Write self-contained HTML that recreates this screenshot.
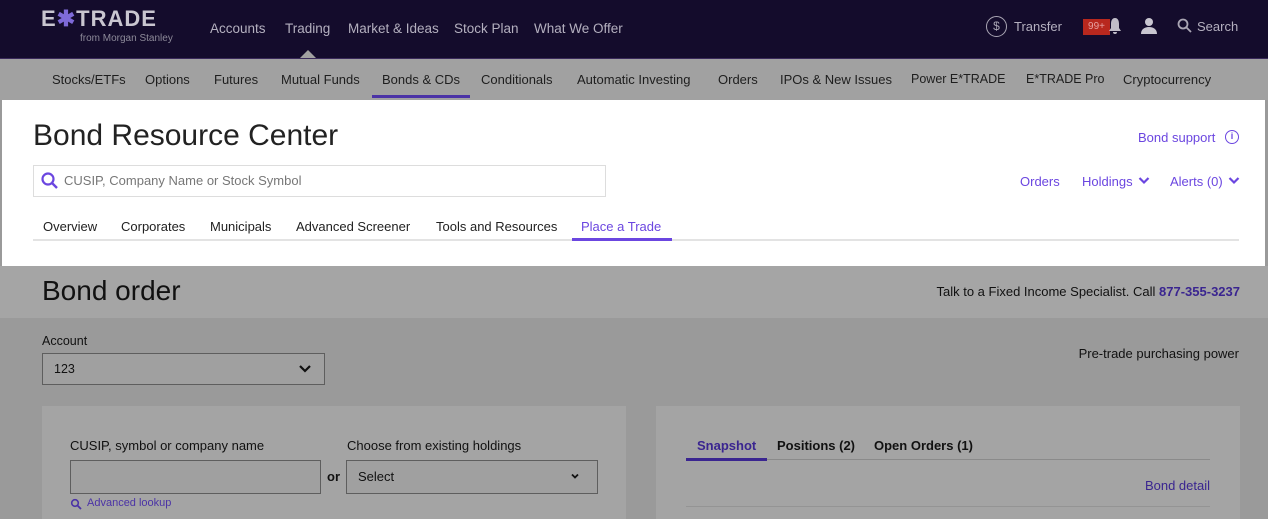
<!DOCTYPE html>
<html><head><meta charset="utf-8"><style>
*{box-sizing:border-box;margin:0;padding:0}
body{width:1268px;height:519px;overflow:hidden;font-family:"Liberation Sans",sans-serif;background:#9a9a9a;position:relative}
.a{position:absolute;white-space:nowrap}
#nav{position:absolute;left:0;top:0;width:1268px;height:58px;background:#140c2c}
#sub{position:absolute;left:0;top:58px;width:1268px;height:42px;background:#a1a1a1;border-top:1px solid #3a2a5a}
.n{color:#b4b0bf;font-size:13.5px;top:21px}
.s{color:#1e1e1e;font-size:13px;top:72px}
#white{position:absolute;left:2px;top:100px;width:1263px;height:166px;background:#fff}
.p{color:#6b46e0}
#band{position:absolute;left:0;top:266px;width:1268px;height:52px;background:#a5a5a5}
.card{position:absolute;background:#a4a4a4}
.box{position:absolute;border:1.5px solid #5e5e5e;background:#a0a0a0}
</style></head><body>
<div id="nav"></div>
<div class="a" style="left:41px;top:6px;color:#c9c6d0;font-size:22px;font-weight:bold;letter-spacing:1px">E<span style="color:#7e6ad8">✱</span>TRADE</div>
<div class="a" style="left:80px;top:33px;color:#8d8a99;font-size:10px">from Morgan Stanley</div>
<div class="a n" style="left:210px">Accounts</div>
<div class="a n" style="left:285px">Trading</div>
<div class="a n" style="left:348px">Market &amp; Ideas</div>
<div class="a n" style="left:454px">Stock Plan</div>
<div class="a n" style="left:534px">What We Offer</div>
<div class="a" style="left:300px;top:50px;width:0;height:0;border-left:8px solid transparent;border-right:8px solid transparent;border-bottom:8px solid #a1a1a1"></div>
<div class="a" style="left:986px;top:16px;width:21px;height:21px;border:1.5px solid #aaa6b4;border-radius:50%;color:#aaa6b4;font-size:12px;text-align:center;line-height:18px">$</div>
<div class="a n" style="left:1014px;top:19px;font-size:13px">Transfer</div>
<div class="a" style="left:1083px;top:19px;width:27px;height:16px;background:#b8281e;color:#e6a0a0;font-size:10px;text-align:center;line-height:16px">99+</div>
<svg class="a" style="left:1108px;top:17px" width="14" height="18" viewBox="0 0 14 18"><path d="M7 1C4 1 3 4 3 7v4l-2 3h12l-2-3V7c0-3-1-6-4-6zM5 15a2 2 0 0 0 4 0z" fill="#c0bdc8"/></svg>
<svg class="a" style="left:1140px;top:17px" width="18" height="18" viewBox="0 0 18 18"><circle cx="9" cy="5" r="4" fill="#c9c6d0"/><path d="M1 17c0-5 4-7 8-7s8 2 8 7z" fill="#c9c6d0"/></svg>
<svg class="a" style="left:1177px;top:18px" width="16" height="16" viewBox="0 0 16 16"><circle cx="6" cy="6" r="4.5" stroke="#aaa6b4" stroke-width="1.8" fill="none"/><path d="M9.5 9.5L14 14" stroke="#aaa6b4" stroke-width="1.8"/></svg>
<div class="a n" style="left:1197px;top:19px;font-size:13px">Search</div>
<div id="sub"></div>
<div class="a s" style="left:52px">Stocks/ETFs</div>
<div class="a s" style="left:145px">Options</div>
<div class="a s" style="left:214px">Futures</div>
<div class="a s" style="left:281px">Mutual Funds</div>
<div class="a s" style="left:382px">Bonds &amp; CDs</div>
<div class="a" style="left:372px;top:95px;width:98px;height:3px;background:#4b33a6"></div>
<div class="a s" style="left:481px">Conditionals</div>
<div class="a s" style="left:577px">Automatic Investing</div>
<div class="a s" style="left:718px">Orders</div>
<div class="a s" style="left:780px">IPOs &amp; New Issues</div>
<div class="a s" style="left:911px;font-size:12.5px">Power E*TRADE</div>
<div class="a s" style="left:1026px;font-size:12.5px">E*TRADE Pro</div>
<div class="a s" style="left:1123px">Cryptocurrency</div>
<div id="white"></div>
<div class="a" style="left:33px;top:119px;font-size:30px;color:#222">Bond Resource Center</div>
<div class="a p" style="left:1138px;top:130px;font-size:13px">Bond support</div>
<div class="a" style="left:1225px;top:130px;width:14px;height:14px;border:1.5px solid #6b46e0;border-radius:50%;color:#6b46e0;font-size:9px;text-align:center;line-height:11px;font-weight:bold">i</div>
<div class="a" style="left:33px;top:165px;width:573px;height:32px;border:1px solid #ddd"></div>
<svg class="a" style="left:40px;top:171px" width="20" height="20" viewBox="0 0 20 20"><circle cx="8" cy="8" r="5.5" stroke="#6b46e0" stroke-width="2.2" fill="none"/><path d="M12 12l5 5" stroke="#6b46e0" stroke-width="2.4"/></svg>
<div class="a" style="left:64px;top:173px;font-size:13px;color:#777">CUSIP, Company Name or Stock Symbol</div>
<div class="a p" style="left:1020px;top:174px;font-size:13px">Orders</div>
<div class="a p" style="left:1082px;top:174px;font-size:13px">Holdings</div>
<svg class="a" style="left:1138px;top:176px" width="12" height="9" viewBox="0 0 12 9"><path d="M1.5 2l4.5 4.5L10.5 2" stroke="#6b46e0" stroke-width="2.2" fill="none"/></svg>
<div class="a p" style="left:1170px;top:174px;font-size:13px">Alerts (0)</div>
<svg class="a" style="left:1228px;top:176px" width="12" height="9" viewBox="0 0 12 9"><path d="M1.5 2l4.5 4.5L10.5 2" stroke="#6b46e0" stroke-width="2.2" fill="none"/></svg>
<div class="a" style="left:43px;top:219px;font-size:13px;color:#222">Overview</div>
<div class="a" style="left:121px;top:219px;font-size:13px;color:#222">Corporates</div>
<div class="a" style="left:210px;top:219px;font-size:13px;color:#222">Municipals</div>
<div class="a" style="left:296px;top:219px;font-size:13px;color:#222">Advanced Screener</div>
<div class="a" style="left:436px;top:219px;font-size:13px;color:#222">Tools and Resources</div>
<div class="a p" style="left:581px;top:219px;font-size:13px">Place a Trade</div>
<div class="a" style="left:33px;top:239px;width:1206px;height:2px;background:#e3e3e3"></div>
<div class="a" style="left:572px;top:238px;width:100px;height:3px;background:#6b46e0"></div>
<div id="band"></div>
<div class="a" style="left:42px;top:275px;font-size:28px;color:#111">Bond order</div>
<div class="a" style="right:28px;top:284px;font-size:13px;color:#111">Talk to a Fixed Income Specialist. Call <b style="color:#3a2590">877-355-3237</b></div>
<div class="a" style="left:42px;top:334px;font-size:12.5px;color:#111">Account</div>
<div class="box" style="left:42px;top:353px;width:283px;height:32px"></div>
<div class="a" style="left:54px;top:362px;font-size:12.5px;color:#111">123</div>
<svg class="a" style="left:298px;top:364px" width="14" height="10" viewBox="0 0 14 10"><path d="M2 2l5 5 5-5" stroke="#111" stroke-width="2.2" fill="none"/></svg>
<div class="a" style="right:29px;top:346px;font-size:13px;color:#111">Pre-trade purchasing power</div>
<div class="card" style="left:42px;top:406px;width:584px;height:113px"></div>
<div class="card" style="left:656px;top:406px;width:584px;height:113px"></div>
<div class="a" style="left:70px;top:438px;font-size:13px;color:#111">CUSIP, symbol or company name</div>
<div class="a" style="left:347px;top:438px;font-size:13px;color:#111">Choose from existing holdings</div>
<div class="box" style="left:70px;top:460px;width:251px;height:34px"></div>
<div class="a" style="left:327px;top:469px;font-size:13px;color:#111;font-weight:bold">or</div>
<div class="box" style="left:346px;top:460px;width:252px;height:34px"></div>
<div class="a" style="left:358px;top:469px;font-size:13px;color:#111">Select</div>
<svg class="a" style="left:570px;top:473px" width="10" height="7" viewBox="0 0 10 7"><path d="M2 1.5l3 3 3-3" stroke="#111" stroke-width="1.8" fill="none"/></svg>
<svg class="a" style="left:70px;top:498px" width="12" height="12" viewBox="0 0 12 12"><circle cx="5" cy="5" r="3.3" stroke="#4b33a6" stroke-width="1.6" fill="none"/><path d="M7.5 7.5L11 11" stroke="#4b33a6" stroke-width="1.8"/></svg>
<div class="a" style="left:87px;top:497px;font-size:11px;color:#4b33a6">Advanced lookup</div>
<div class="a" style="left:697px;top:438px;font-size:13px;color:#3a2590;font-weight:bold">Snapshot</div>
<div class="a" style="left:777px;top:438px;font-size:13px;color:#111;font-weight:bold">Positions (2)</div>
<div class="a" style="left:874px;top:438px;font-size:13px;color:#111;font-weight:bold">Open Orders (1)</div>
<div class="a" style="left:686px;top:459px;width:524px;height:1px;background:#8a8a8a"></div>
<div class="a" style="left:686px;top:458px;width:81px;height:3px;background:#3a2590"></div>
<div class="a" style="right:58px;top:478px;font-size:13px;color:#3a2590">Bond detail</div>
<div class="a" style="left:686px;top:506px;width:524px;height:1px;background:#949494"></div>
</body></html>
